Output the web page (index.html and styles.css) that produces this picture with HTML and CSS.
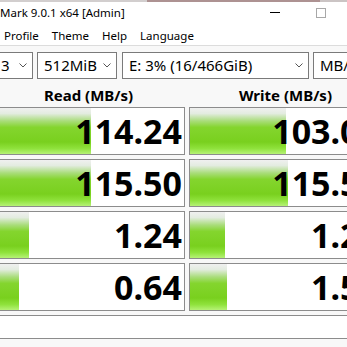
FILE: index.html
```html
<!DOCTYPE html>
<html>
	<head>
		<meta charset="UTF-8">
		<title>CrystalDiskMark</title>
		<link rel="stylesheet" href="styles.css">
	</head>
	<body>
		<div class="edge">
			<span class="edge-a"></span>
			<span class="edge-b"></span>
			<span class="edge-c"></span>
		</div>
		<div class="titlebar">
			<span class="title">Mark 9.0.1 x64 [Admin]</span>
			<span class="capbtn">
				<svg width="10" height="10" viewBox="0 0 10 10"><path d="M0 4.5H10" stroke="#000" stroke-width="1"/></svg>
			</span>
			<span class="capbtn">
				<svg width="10" height="10" viewBox="0 0 10 10"><rect x="0.5" y="0.5" width="9" height="9" fill="none" stroke="#a8a8a8" stroke-width="1"/></svg>
			</span>
			<span class="capbtn"></span>
		</div>
		<div class="menubar">
			<span class="menu">Profile</span>
			<span class="menu">Theme</span>
			<span class="menu">Help</span>
			<span class="menu">Language</span>
		</div>

		<div class="main">
			<div class="selects">
				<div class="sel sel-count"><span>3</span><svg width="8" height="5" viewBox="0 0 8 5"><path d="M0.5 0.5L4 4L7.5 0.5" fill="none" stroke="#555"/></svg></div>
				<div class="sel sel-size"><span>512MiB</span><svg width="8" height="5" viewBox="0 0 8 5"><path d="M0.5 0.5L4 4L7.5 0.5" fill="none" stroke="#555"/></svg></div>
				<div class="sel sel-drive"><span>E: 3% (16/466GiB)</span><svg width="8" height="5" viewBox="0 0 8 5"><path d="M0.5 0.5L4 4L7.5 0.5" fill="none" stroke="#555"/></svg></div>
				<div class="sel sel-unit"><span>MB/s</span><svg width="8" height="5" viewBox="0 0 8 5"><path d="M0.5 0.5L4 4L7.5 0.5" fill="none" stroke="#555"/></svg></div>
			</div>

			<div class="heads">
				<div class="head">Read (MB/s)</div>
				<div class="head">Write (MB/s)</div>
			</div>

			<div class="results">
				<div class="cell" style="--w:98px">114.24</div>
				<div class="cell" style="--w:96px">103.07</div>
				<div class="cell" style="--w:98px">115.50</div>
				<div class="cell" style="--w:98px">115.56</div>
				<div class="cell" style="--w:36px">1.24</div>
				<div class="cell" style="--w:35px">1.27</div>
				<div class="cell" style="--w:26px">0.64</div>
				<div class="cell" style="--w:37px">1.53</div>
			</div>

			<div class="comment"></div>
		</div>
	</body>
</html>
```

FILE: styles.css
```css
*{margin: 0;padding: 0;box-sizing: border-box;}
html,body{width: 347px;height: 347px;overflow: hidden;}
body{font-family: "Noto Sans", "Open Sans", sans-serif;color: #000;background: #f8f8f8;}

.edge{display: flex;height: 2px;}
.edge-a{width: 147px;background: #d2cece;}
.edge-b{width: 173px;background: #ad9292;}
.edge-c{flex: 1;background: #cbc4c4;}

.titlebar{display: flex;width: 390px;height: 22px;background: #fff;}
.title{flex: 1;font-size: 11.5px;line-height: 22px;white-space: nowrap;}
.capbtn{width: 46px;display: flex;align-items: center;justify-content: center;}

.menubar{display: flex;gap: 13px;height: 22px;padding: 2px 0 0 4px;background: #fff;border-bottom: 1px solid #dcdcdc;}
.menu{font-size: 11.5px;line-height: 19px;}

.main{padding-top: 6px;}

.selects{display: flex;gap: 4px;margin-left: -6px;width: 400px;}
.sel{height: 27px;border: 1px solid #7a7a7a;background: #fff;display: flex;align-items: center;justify-content: space-between;padding: 0 5px 1px 6px;font-size: 15px;white-space: nowrap;}
.sel svg{flex: none;margin-left: 6px;}
.sel-count{width: 39px;}
.sel-size{width: 80px;margin-right: 1px;}
.sel-drive{width: 187px;}
.sel-unit{width: 70px;}

.heads{display: grid;grid-template-columns: 193px 193px;column-gap: 4px;margin-left: -8px;height: 28px;}
.head{text-align: center;font-size: 15px;font-weight: bold;line-height: 20px;padding-top: 6px;}

.results{display: grid;grid-template-columns: 193px 193px;grid-auto-rows: 48px;gap: 4px;margin-left: -8px;}
.cell{border: 1px solid #8c8c8c;background: linear-gradient(#f0f0f0 0%, #e3ece0 12%, #aadd7c 28%, #84d52e 42%, #79d01e 74%, #8fe23c 88%, #b6f276 100%) no-repeat, #fff;background-size: var(--w) 100%, auto;text-align: right;padding-right: 2px;font-size: 34px;font-weight: bold;line-height: 46px;letter-spacing: 0;}

.comment{height: 24px;margin: 4px 0 0 -8px;width: 400px;border-top: 1px solid #8c8c8c;border-bottom: 1px solid #8c8c8c;background: #fff;}
```
